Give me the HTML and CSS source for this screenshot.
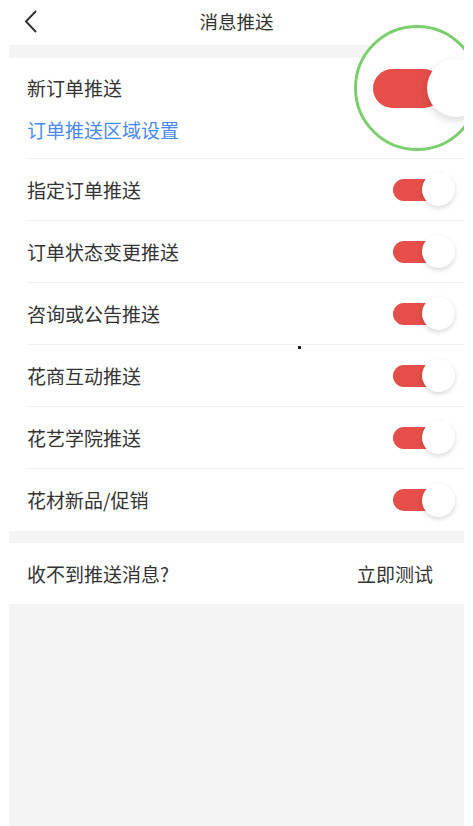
FILE: index.html
```html
<!DOCTYPE html>
<html lang="zh-CN">
  <head>
    <meta charset="UTF-8" />
    <meta name="viewport" content="width=device-width, initial-scale=1.0" />
    <title>消息推送</title>
    <link rel="stylesheet" href="styles.css">
  </head>
  <body>
    <div class="page">
      <!-- Header -->
      <div class="header">
        <svg class="back" width="16" height="26" viewBox="0 0 16 26">
          <polyline points="13,2 3,12.5 13,23" fill="none" stroke="#333" stroke-width="2" />
        </svg>
        <div class="title">消息推送</div>
      </div>

      <div class="gap"></div>

      <!-- Push switches -->
      <div class="section">
        <div class="row row-first">
          <div class="row-text">
            <div class="label">新订单推送</div>
            <div class="link">订单推送区域设置</div>
          </div>
          <div class="switch"><span class="track"></span><span class="knob"></span></div>
        </div>
        <div class="row">
          <div class="label">指定订单推送</div>
          <div class="switch"><span class="track"></span><span class="knob"></span></div>
        </div>
        <div class="row">
          <div class="label">订单状态变更推送</div>
          <div class="switch"><span class="track"></span><span class="knob"></span></div>
        </div>
        <div class="row">
          <div class="label">咨询或公告推送</div>
          <div class="switch"><span class="track"></span><span class="knob"></span></div>
        </div>
        <div class="row">
          <div class="label">花商互动推送</div>
          <div class="switch"><span class="track"></span><span class="knob"></span></div>
        </div>
        <div class="row">
          <div class="label">花艺学院推送</div>
          <div class="switch"><span class="track"></span><span class="knob"></span></div>
        </div>
        <div class="row row-last">
          <div class="label">花材新品/促销</div>
          <div class="switch"><span class="track"></span><span class="knob"></span></div>
        </div>
      </div>

      <div class="gap"></div>

      <!-- Test push -->
      <div class="test-row">
        <div class="label">收不到推送消息?</div>
        <div class="test-btn">立即测试</div>
      </div>

      <div class="filler"></div>

      <!-- Magnifier highlight over the first switch -->
      <div class="magnifier">
        <span class="big-track"></span><span class="big-knob"></span>
      </div>
      <span class="dot"></span>
    </div>
  </body>
</html>
```

FILE: styles.css
```css
/* Base */
body {
  margin: 0;
  background: #fff;
  font-family: "Noto Sans CJK SC", "Noto Sans", sans-serif;
  color: #333;
}

.page {
  position: relative;
  margin: 0 9px;
  height: 826px;
  display: flex;
  flex-direction: column;
  overflow: hidden;
  background: #fff;
}

/* Header */
.header {
  height: 45px;
  display: flex;
  align-items: center;
  justify-content: center;
  position: relative;
}

.back {
  position: absolute;
  left: 14px;
  top: 9px;
}

.title {
  font-size: 18.5px;
  line-height: 26px;
  margin-top: -3px;
  color: #333;
}

.gap {
  height: 12px;
  background: #f4f4f4;
}

.header + .gap {
  height: 13px;
}

/* Rows */
.section {
  background: #fff;
}

.row {
  height: 62px;
  margin-left: 18px;
  padding-right: 9px;
  display: flex;
  align-items: center;
  justify-content: space-between;
  border-bottom: 1px solid #f0f0f0;
  box-sizing: border-box;
}

.row-first {
  height: 101px;
  align-items: flex-start;
  padding-top: 17px;
}

.row-last {
  border-bottom: none;
}

.label {
  font-size: 19px;
  line-height: 26px;
  color: #333;
}

.link {
  font-size: 19px;
  line-height: 26px;
  margin-top: 16px;
  color: #4a8af0;
}

/* Switch */
.switch {
  display: flex;
  align-items: center;
}

.row-first .switch {
  margin-top: -4px;
}

.track {
  width: 44px;
  height: 22px;
  border-radius: 11px;
  background: #e54e49;
}

.knob {
  width: 33px;
  height: 33px;
  border-radius: 50%;
  margin-left: -15px;
  background: #fff;
  box-shadow: 0 2px 5px rgba(0, 0, 0, 0.16);
}

/* Test row */
.test-row {
  height: 61px;
  padding: 0 31px 0 18px;
  display: flex;
  align-items: center;
  justify-content: space-between;
}

.test-btn {
  font-size: 19px;
  line-height: 26px;
  color: #333;
}

.filler {
  flex: 1;
  background: #f4f4f4;
}

/* Magnifier circle */
.magnifier {
  position: absolute;
  left: 345px;
  top: 25px;
  width: 120px;
  height: 120px;
  border: 3px solid #7ccf6f;
  border-radius: 50%;
  background: #fff;
  display: flex;
  align-items: center;
  padding-left: 16px;
  box-sizing: content-box;
  width: 104px;
}

.big-track {
  flex: none;
  width: 70px;
  height: 39px;
  border-radius: 20px;
  background: #e54e49;
}

.big-knob {
  flex: none;
  width: 58px;
  height: 58px;
  margin-left: -16px;
  border-radius: 50%;
  background: #fff;
  box-shadow: 0 3px 9px rgba(0, 0, 0, 0.16);
}

.dot {
  position: absolute;
  left: 289px;
  top: 346px;
  width: 3px;
  height: 3px;
  background: #222;
}
```
